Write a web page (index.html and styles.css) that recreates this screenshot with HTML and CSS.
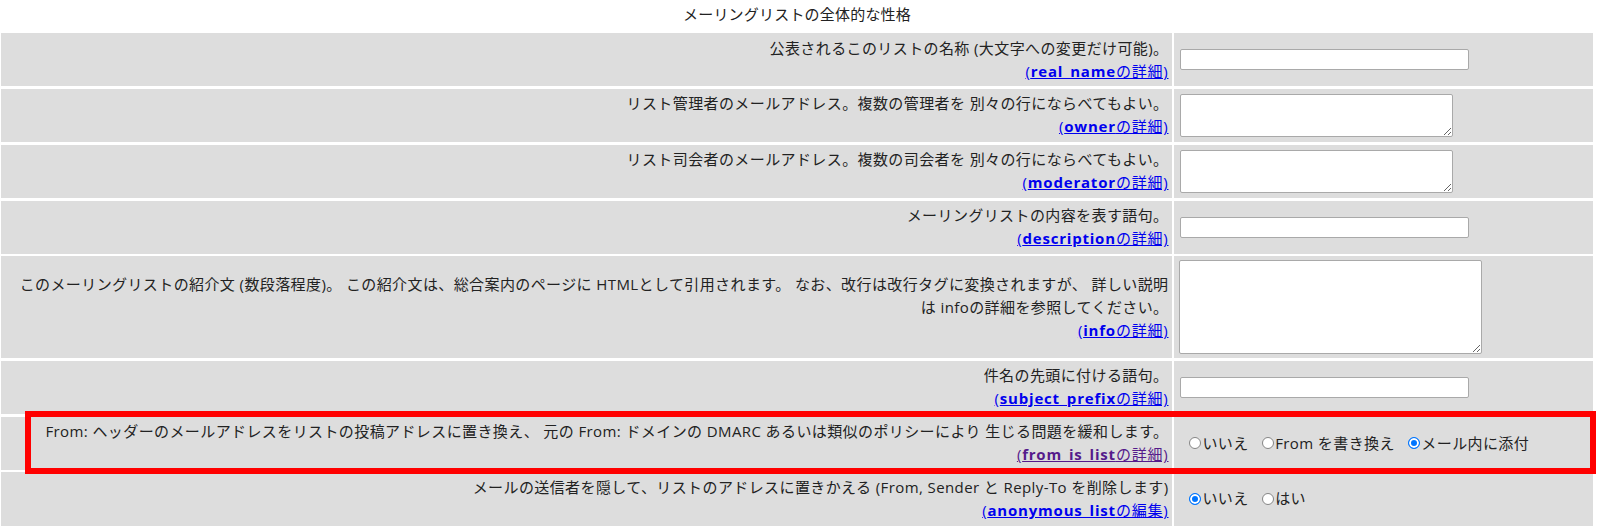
FILE: index.html
```html
<!DOCTYPE html>
<html lang="ja">
<head>
<meta charset="utf-8">
<title>メーリングリストの全体的な性格</title>
<link rel="stylesheet" href="styles.css">
</head>
<body>
<div class="page">
  <div class="title">メーリングリストの全体的な性格</div>
  <div class="rows">
    <div class="row">
      <div class="label">公表されるこのリストの名称 (大文字への変更だけ可能)。<br><a href="#real_name">(<b>real_name</b>の詳細)</a></div>
      <div class="value"><input class="text" type="text"></div>
    </div>
    <div class="row">
      <div class="label">リスト管理者のメールアドレス。複数の管理者を 別々の行にならべてもよい。<br><a href="#owner">(<b>owner</b>の詳細)</a></div>
      <div class="value"><textarea class="area"></textarea></div>
    </div>
    <div class="row">
      <div class="label">リスト司会者のメールアドレス。複数の司会者を 別々の行にならべてもよい。<br><a href="#moderator">(<b>moderator</b>の詳細)</a></div>
      <div class="value"><textarea class="area"></textarea></div>
    </div>
    <div class="row">
      <div class="label">メーリングリストの内容を表す語句。<br><a href="#description">(<b>description</b>の詳細)</a></div>
      <div class="value"><input class="text" type="text"></div>
    </div>
    <div class="row">
      <div class="label">このメーリングリストの紹介文 (数段落程度)。 この紹介文は、総合案内のページに HTMLとして引用されます。 なお、改行は改行タグに変換されますが、 詳しい説明<br>は infoの詳細を参照してください。<br><a href="#info">(<b>info</b>の詳細)</a></div>
      <div class="value"><textarea class="area big"></textarea></div>
    </div>
    <div class="row">
      <div class="label">件名の先頭に付ける語句。<br><a href="#subject_prefix">(<b>subject_prefix</b>の詳細)</a></div>
      <div class="value"><input class="text" type="text"></div>
    </div>
    <div class="row">
      <div class="label">From: ヘッダーのメールアドレスをリストの投稿アドレスに置き換え、 元の From: ドメインの DMARC あるいは類似のポリシーにより 生じる問題を緩和します。<br><a class="visited" href="#from_is_list">(<b>from_is_list</b>の詳細)</a></div>
      <div class="value radios">
        <label class="opt"><input type="radio" name="fil"><span>いいえ</span></label>
        <label class="opt"><input type="radio" name="fil"><span>From を書き換え</span></label>
        <label class="opt"><input type="radio" name="fil" checked><span>メール内に添付</span></label>
      </div>
    </div>
    <div class="row">
      <div class="label">メールの送信者を隠して、リストのアドレスに置きかえる (From, Sender と Reply-To を削除します)<br><a href="#anonymous_list">(<b>anonymous_list</b>の編集)</a></div>
      <div class="value radios">
        <label class="opt"><input type="radio" name="anon" checked><span>いいえ</span></label>
        <label class="opt"><input type="radio" name="anon"><span>はい</span></label>
      </div>
    </div>
  </div>
  <div class="highlight"></div>
</div>
</body>
</html>
```
FILE: styles.css
```css
html, body {
  margin: 0;
  padding: 0;
  background: #ffffff;
}
body {
  font-family: "Open Sans", "Noto Sans CJK JP", sans-serif;
  font-size: 15px;
  color: #222222;
}
.page {
  position: relative;
  width: 1592px;
  margin-left: 1px;
}
.title {
  height: 30.33px;
  line-height: 28px;
  text-align: center;
  letter-spacing: 0.2px;
  margin-bottom: 2.67px;
}
.rows {
  display: flex;
  flex-direction: column;
  gap: 2.67px;
}
.row {
  display: grid;
  grid-template-columns: 1170.7px 1fr;
  column-gap: 2.6px;
}
.label {
  background: #dddddd;
  padding: 3.6px 3.2px 3.6px 3.6px;
  line-height: 23px;
  letter-spacing: 0.4px;
  text-align: right;
  display: flex;
  flex-direction: column;
  justify-content: center;
}
.label a {
  color: #0000ee;
  text-decoration: underline;
  letter-spacing: 0.8px;
}
.label a.visited {
  color: #551a8b;
}
.label a b {
  font-weight: 700;
}
.value {
  background: #dddddd;
  padding: 3.6px 3.6px 3.6px 5.7px;
  display: flex;
  align-items: center;
}
.text {
  box-sizing: border-box;
  width: 289px;
  height: 21px;
  margin: 0;
  border: 1px solid #a9a9a9;
  border-radius: 2px;
  background: #ffffff;
  padding: 1px 2px;
  font: inherit;
}
.area {
  box-sizing: border-box;
  width: 273px;
  height: 43px;
  margin: 0;
  border: 1px solid #a9a9a9;
  border-radius: 2px;
  background: #ffffff;
  font: inherit;
}
.area.big {
  width: 303px;
  height: 94.5px;
  margin-left: -0.7px;
}
.radios {
  padding-left: 14.7px;
}
.opt {
  display: flex;
  align-items: center;
  margin-right: 13px;
  line-height: 23px;
  letter-spacing: 0.4px;
}
.opt input {
  appearance: none;
  -webkit-appearance: none;
  box-sizing: border-box;
  width: 12px;
  height: 12px;
  margin: 0 1.5px 0 0;
  border: 1px solid #858585;
  border-radius: 50%;
  background: #ffffff;
}
.opt input:checked {
  border-color: #0075ff;
  background: #0075ff;
  box-shadow: inset 0 0 0 2px #ffffff;
}
.highlight {
  position: absolute;
  left: 23.5px;
  top: 410.7px;
  width: 1571px;
  height: 63.3px;
  box-sizing: border-box;
  border: 6px solid #ff0000;
  pointer-events: none;
}
```
